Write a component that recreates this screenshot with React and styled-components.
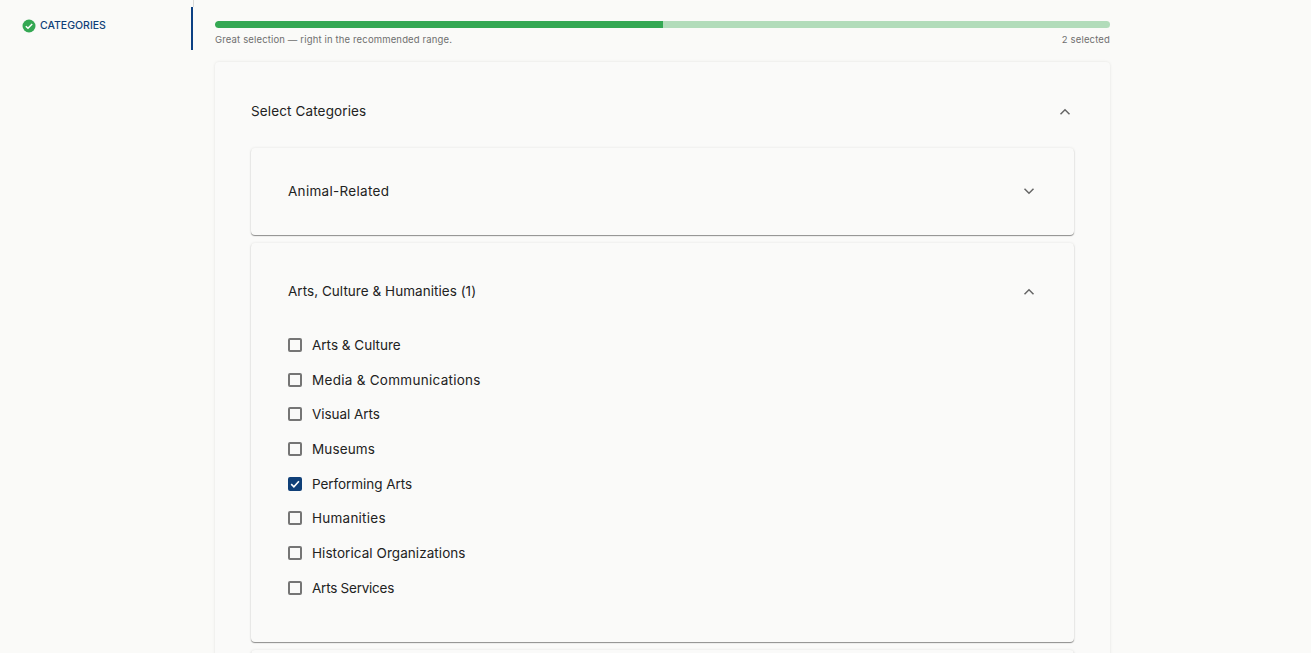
import React from 'react';
import styled, { createGlobalStyle } from 'styled-components';

const Global = createGlobalStyle`
  html, body { margin: 0; padding: 0; height: 653px; overflow: hidden; background: #fafaf8; }
  body { font-family: Inter, "Liberation Sans", sans-serif; color: #1d1d1f; }
`;
const Page = styled.div`
  display: flex; align-items: flex-start; height: 653px; overflow: hidden; background: #fafaf8;
`;
const Sidebar = styled.aside`
  width: 191px; flex: none; padding: 18px 0 0 22px; box-sizing: border-box;
  display: flex; align-items: flex-start; gap: 4px;
`;
const StepLabel = styled.span`
  font-size: 10.5px; line-height: 15px; font-weight: 500; color: #0f3f78; letter-spacing: 0;
`;
const Main = styled.main`
  flex: none; width: 919px; position: relative; box-sizing: border-box; padding: 21px 0 0 24px;
  &::before {
    content: ''; position: absolute; left: 0; top: 7px; width: 2px; height: 43px; background: #0c4083;
  }
  &::after {
    content: ''; position: absolute; left: 2px; top: 0; width: 1px; height: 7px; background: #d9d9d7;
  }
`;
const Track = styled.div`
  width: 895px; height: 7px; border-radius: 4px; background: #b2dcba; overflow: hidden;
`;
const Fill = styled.div`
  height: 100%; background: #34a853; border-radius: 4px 0 0 4px;
`;
const Hints = styled.div`
  width: 895px; display: flex; justify-content: space-between; margin-top: 5px;
  font-size: 9.5px; line-height: 14px; letter-spacing: 0.15px; color: #6f6f6f;
`;
const Outer = styled.section`
  width: 895px; margin-top: 15px; box-sizing: border-box; background: #fafaf9; border-radius: 4px;
  box-shadow: 0 0 3px rgba(0,0,0,.1); padding: 0 36px 20px;
`;
const OuterHead = styled.div`
  height: 86px; box-sizing: border-box; padding-top: 12px; display: flex; align-items: center; justify-content: space-between;
  font-size: 13.5px; letter-spacing: 0.13px; color: #222;
`;
const Inner = styled.div`
  background: #fafaf9; border-radius: 4px; margin-bottom: 8px; padding: 0 36px 0 37px; min-height: 87px;
  box-shadow: 0 1px 1px rgba(0,0,0,.42), 0 0 3px rgba(0,0,0,.09);
`;
const InnerHead = styled.div`
  height: ${p => p.$h}px; box-sizing: border-box; padding: ${p => p.$pad};
  display: flex; align-items: center; justify-content: space-between;
  font-size: 13.5px; letter-spacing: ${p => p.$ls}px; color: #222;
`;
const List = styled.ul`
  list-style: none; margin: 0; padding: 0 0 37px; display: flex; flex-direction: column;
`;
const Row = styled.li`
  height: 34.7px; display: flex; align-items: center; gap: 10px; font-size: 13.5px; letter-spacing: ${p => p.$ls}px; color: #222;
`;
const Box = styled.span`
  width: 14px; height: 14px; flex: none; border-radius: 2px; box-sizing: border-box;
  border: 2px solid ${p => (p.$on ? '#0f3f78' : '#757575')};
  background: ${p => (p.$on ? '#0f3f78' : 'transparent')};
  display: flex; align-items: center; justify-content: center;
`;
const ChevronSvg = styled.svg`
  margin: ${p => (p.$up ? '2px 3px 0 0' : '0 3px 0 0')};
`;

const Chevron = ({ up }) => (
  <ChevronSvg $up={up} width="12" height="8" viewBox="0 0 12 8" fill="none" stroke="#666" strokeWidth="1.5">
    <path d={up ? 'M1.5 6.2 6 1.8l4.5 4.4' : 'M1.5 1.8 6 6.2l4.5-4.4'} />
  </ChevronSvg>
);
const CheckCircle = () => (
  <svg width="14" height="14" viewBox="0 0 14 14" style={{ flex: 'none', marginTop: 1 }}>
    <circle cx="7" cy="7" r="6.5" fill="#34a853" />
    <path d="M3.8 7.2 6 9.3l4.2-4.3" fill="none" stroke="#fff" strokeWidth="1.5" />
  </svg>
);

const items = [
  ['Arts & Culture', 0],
  ['Media & Communications', 0.28],
  ['Visual Arts', -0.04],
  ['Museums', 0.14],
  ['Performing Arts', -0.06],
  ['Humanities', 0.24],
  ['Historical Organizations', 0.06],
  ['Arts Services', -0.24],
];

export default function App() {
  return (
    <Page>
      <Global />
      <Sidebar><CheckCircle /><StepLabel>CATEGORIES</StepLabel></Sidebar>
      <Main>
        <Track><Fill style={{ width: '50%' }} /></Track>
        <Hints><span>Great selection — right in the recommended range.</span><span>2 selected</span></Hints>
        <Outer>
          <OuterHead>Select Categories<Chevron up /></OuterHead>
          <Inner><InnerHead $h={87} $pad="0 0 1px" $ls={0.3}>Animal-Related<Chevron /></InnerHead></Inner>
          <Inner>
            <InnerHead $h={84.65} $pad="12px 0 0" $ls={0.04}>Arts, Culture &amp; Humanities (1)<Chevron up /></InnerHead>
            <List>
              {items.map(([t, ls]) => {
                const on = t === 'Performing Arts';
                return (
                  <Row key={t} $ls={ls}>
                    <Box $on={on}>
                      {on && <svg width="10" height="10" viewBox="0 0 10 10" fill="none" stroke="#fff" strokeWidth="1.6"><path d="M1.2 5.2 3.9 7.8 8.9 2.3" /></svg>}
                    </Box>
                    {t}
                  </Row>
                );
              })}
            </List>
          </Inner>
          <Inner />
        </Outer>
      </Main>
    </Page>
  );
}
